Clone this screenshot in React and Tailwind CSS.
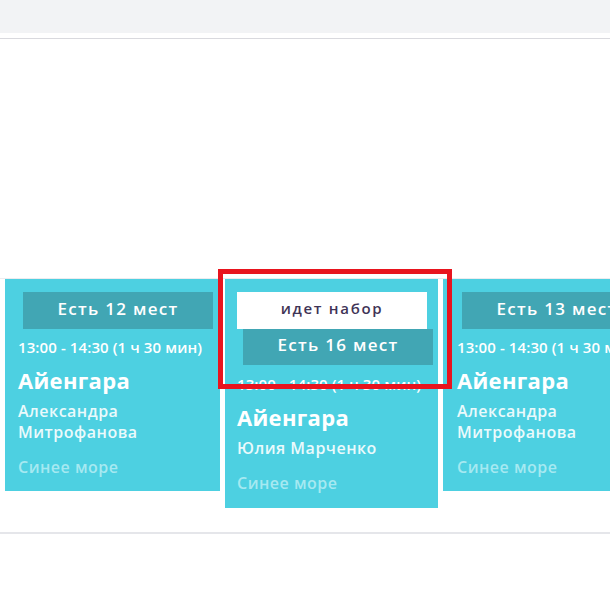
import React from "react";

const font = { fontFamily: "'Open Sans', Lato, sans-serif" };

function Card({ w, seats, teacher, recruiting, px }) {
  return (
    <div
      className={`shrink-0 bg-[#4dd0e1] ${px} pt-[13px] ${recruiting ? "pb-[14px]" : "pb-[13px]"}`}
      style={{ width: w }}
    >
      {recruiting && (
        <div className="flex h-[37px] w-[190px] items-center justify-center bg-white pb-[4px] text-[15px] font-semibold tracking-[1.7px] text-[#3f3456]">
          идет набор
        </div>
      )}
      <div
        className={`flex w-[190px] items-center justify-center bg-[#41a6b4] pb-[4px] text-[17px] font-semibold tracking-[1.3px] text-white ${
          recruiting ? "ml-[6px] h-[36px]" : "ml-[5px] h-[37px]"
        }`}
      >
        {seats}
      </div>
      <div className={`${recruiting ? "mt-[9px]" : "mt-[8px]"} text-[15px] font-semibold leading-[20px] tracking-[0.1px] text-white whitespace-nowrap`}>
        13:00 - 14:30 (1 ч 30 мин)
      </div>
      <div className="mt-[9px] text-[22px] font-bold leading-[28px] tracking-[0.3px] text-white">
        Айенгара
      </div>
      <div className="mt-[7px] text-[16px] font-semibold leading-[21px] tracking-[0.5px] text-[#eafafc]">
        {teacher}
      </div>
      <div className="mt-[14px] text-[16px] font-semibold leading-[21px] tracking-[0.5px] text-[#a6e9f1]">
        Синее море
      </div>
    </div>
  );
}

export default function App() {
  return (
    <div className="h-[610px] w-[610px] overflow-hidden bg-white" style={font}>
      <div className="h-[33px] bg-[#f2f3f5]" />
      <div className="mt-[5px] border-t border-[#d9d9de]" />
      <div className="h-[239px]" />
      <div className="border-t border-[#ececef]" />
      <div className="relative flex items-start gap-[5px] pl-[5px]">
        <Card
          w={215}
          px="px-[13px]"
          seats="Есть 12 мест"
          teacher={
            <>
              Александра
              <br />
              Митрофанова
            </>
          }
        />
        <div className="relative">
          <Card
            w={213}
            px="px-[12px]"
            recruiting
            seats="Есть 16 мест"
            teacher="Юлия Марченко"
          />
          <div className="pointer-events-none absolute left-[-7px] top-[-10px] h-[120px] w-[234px] border-[5px] border-[#e8141e]" />
        </div>
        <Card
          w={215}
          px="px-[14px]"
          seats="Есть 13 мест"
          teacher={
            <>
              Александра
              <br />
              Митрофанова
            </>
          }
        />
      </div>
      <div className="mt-[24px] h-[2px] bg-[#e5e6ea]" />
    </div>
  );
}
